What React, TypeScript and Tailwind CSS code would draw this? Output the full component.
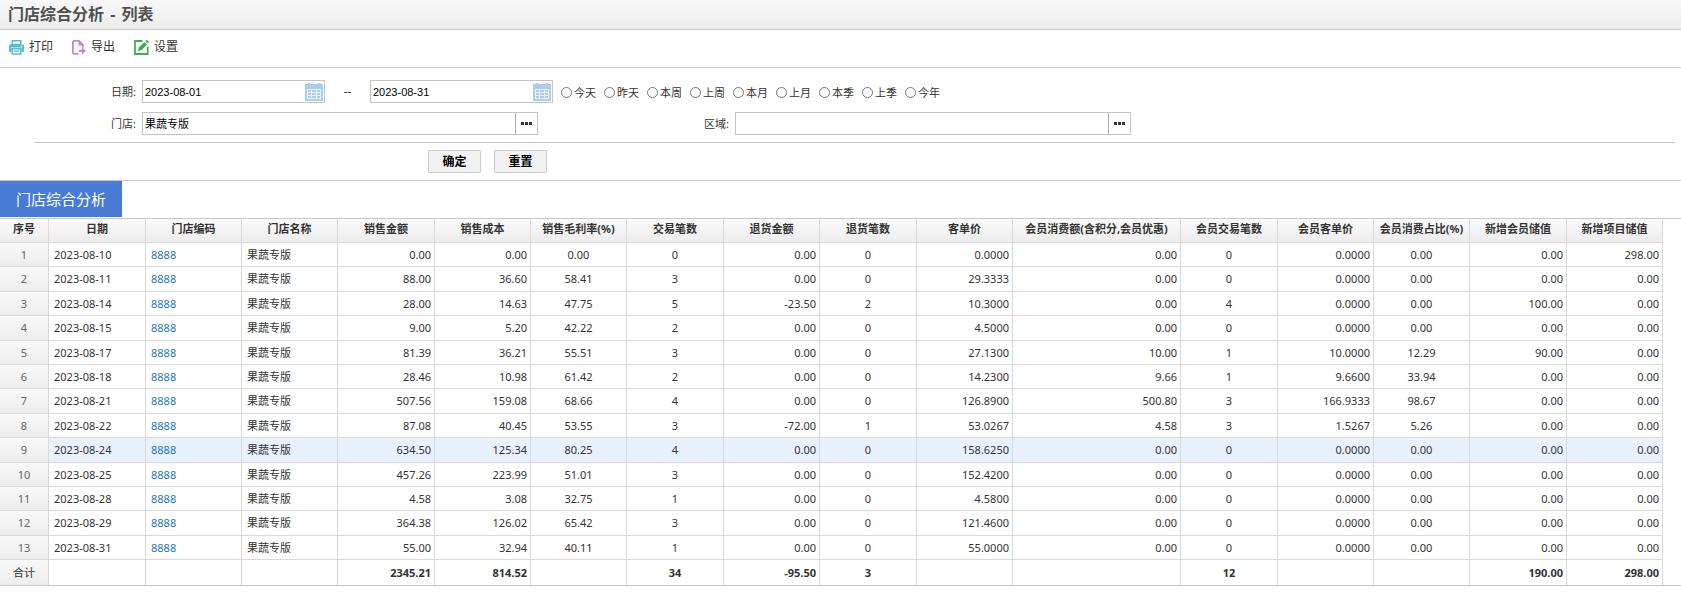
import { useState } from "react";
import clsx from "clsx";

type Align = "left" | "center" | "right";

type Column = {
  title: string;
  width: number;
  align: Align;
};

const columns: Column[] = [
  { title: "日期", width: 97, align: "left" },
  { title: "门店编码", width: 96, align: "left" },
  { title: "门店名称", width: 96, align: "left" },
  { title: "销售金额", width: 97, align: "right" },
  { title: "销售成本", width: 96, align: "right" },
  { title: "销售毛利率(%)", width: 96, align: "center" },
  { title: "交易笔数", width: 97, align: "center" },
  { title: "退货金额", width: 96, align: "right" },
  { title: "退货笔数", width: 97, align: "center" },
  { title: "客单价", width: 96, align: "right" },
  { title: "会员消费额(含积分,会员优惠)", width: 168, align: "right" },
  { title: "会员交易笔数", width: 97, align: "center" },
  { title: "会员客单价", width: 96, align: "right" },
  { title: "会员消费占比(%)", width: 96, align: "center" },
  { title: "新增会员储值", width: 97, align: "right" },
  { title: "新增项目储值", width: 96, align: "right" },
];

const STORE = ["8888", "果蔬专版"];

const rows: string[][] = [
  ["2023-08-10", ...STORE, "0.00", "0.00", "0.00", "0", "0.00", "0", "0.0000", "0.00", "0", "0.0000", "0.00", "0.00", "298.00"],
  ["2023-08-11", ...STORE, "88.00", "36.60", "58.41", "3", "0.00", "0", "29.3333", "0.00", "0", "0.0000", "0.00", "0.00", "0.00"],
  ["2023-08-14", ...STORE, "28.00", "14.63", "47.75", "5", "-23.50", "2", "10.3000", "0.00", "4", "0.0000", "0.00", "100.00", "0.00"],
  ["2023-08-15", ...STORE, "9.00", "5.20", "42.22", "2", "0.00", "0", "4.5000", "0.00", "0", "0.0000", "0.00", "0.00", "0.00"],
  ["2023-08-17", ...STORE, "81.39", "36.21", "55.51", "3", "0.00", "0", "27.1300", "10.00", "1", "10.0000", "12.29", "90.00", "0.00"],
  ["2023-08-18", ...STORE, "28.46", "10.98", "61.42", "2", "0.00", "0", "14.2300", "9.66", "1", "9.6600", "33.94", "0.00", "0.00"],
  ["2023-08-21", ...STORE, "507.56", "159.08", "68.66", "4", "0.00", "0", "126.8900", "500.80", "3", "166.9333", "98.67", "0.00", "0.00"],
  ["2023-08-22", ...STORE, "87.08", "40.45", "53.55", "3", "-72.00", "1", "53.0267", "4.58", "3", "1.5267", "5.26", "0.00", "0.00"],
  ["2023-08-24", ...STORE, "634.50", "125.34", "80.25", "4", "0.00", "0", "158.6250", "0.00", "0", "0.0000", "0.00", "0.00", "0.00"],
  ["2023-08-25", ...STORE, "457.26", "223.99", "51.01", "3", "0.00", "0", "152.4200", "0.00", "0", "0.0000", "0.00", "0.00", "0.00"],
  ["2023-08-28", ...STORE, "4.58", "3.08", "32.75", "1", "0.00", "0", "4.5800", "0.00", "0", "0.0000", "0.00", "0.00", "0.00"],
  ["2023-08-29", ...STORE, "364.38", "126.02", "65.42", "3", "0.00", "0", "121.4600", "0.00", "0", "0.0000", "0.00", "0.00", "0.00"],
  ["2023-08-31", ...STORE, "55.00", "32.94", "40.11", "1", "0.00", "0", "55.0000", "0.00", "0", "0.0000", "0.00", "0.00", "0.00"],
];

const totals = ["", "", "", "2345.21", "814.52", "", "34", "-95.50", "3", "", "", "12", "", "", "190.00", "298.00"];

const periods = ["今天", "昨天", "本周", "上周", "本月", "上月", "本季", "上季", "今年"];

const alignClass: Record<Align, string> = {
  left: "pl-[5px] text-left",
  center: "text-center",
  right: "pr-[3px] text-right",
};

function PrintIcon() {
  return (
    <svg width="15" height="15" viewBox="0 0 15 15" aria-hidden="true">
      <path fill="#52bfcc" d="M2.500 0h10v4.500h-10zM1.500 4.200h12A1.500 1.500 0 0 1 15 5.700V11a1 1 0 0 1-1 1h-1.500V8.500h-10V12H1a1 1 0 0 1-1-1V5.700a1.500 1.500 0 0 1 1.500-1.500z" />
      <path fill="#fff" d="M4 1.500h7V4H4zM2 7.500h11v1H2z" />
      <path fill="none" stroke="#52bfcc" strokeWidth="1.500" d="M3.300 8.800h8.400v5.200H3.300z" />
      <path fill="#52bfcc" d="M5 10.500h5v1.300H5z" />
      <path fill="#fff" d="M11.800 5.500h1.400v1h-1.400z" />
    </svg>
  );
}

function ExportIcon() {
  return (
    <svg width="14" height="15" viewBox="0 0 14 15" aria-hidden="true">
      <path fill="none" stroke="#cf7ee0" strokeWidth="1.800" d="M6.500 13.800H2.200a1.300 1.300 0 0 1-1.300-1.300V2A1.200 1.200 0 0 1 2.100.9h5l3.800 4V7.500" />
      <path fill="#cf7ee0" d="M6.500.5 11.500 5.500h-5zM7 9.800h3V7.300l4 3.600-4 3.600v-2.400H7z" />
    </svg>
  );
}

function SettingIcon() {
  return (
    <svg width="15" height="15" viewBox="0 0 15 15" aria-hidden="true">
      <path fill="none" stroke="#44ad52" strokeWidth="1.800" d="M8.500 1H1v13h12.700V6.500" />
      <path fill="#44ad52" d="m4 11.200.8-3.800L10.400 2l2.700 2.600-5.700 5.600zM11.200 1.200l1-1q.6-.4 1.200.1l1.200 1.200q.5.6 0 1.200l-.8.9z" />
    </svg>
  );
}

function CalendarIcon() {
  return (
    <svg width="18" height="18" viewBox="0 0 18 18" aria-hidden="true">
      <path fill="#aecde8" d="M0 1h2.500V0h3v1h7V0h3v1H18v17H0z" />
      <path fill="#e9f3fb" d="M2 6h14v10H2z" />
      <path fill="#aecde8" d="M3 7h3v2H3zM7 7h4v2H7zM12 7h3v2h-3zM3 10h3v2H3zM7 10h4v2H7zM12 10h3v2h-3zM3 13h3v2H3zM7 13h4v2H7zM12 13h3v2h-3z" />
    </svg>
  );
}

function DateField({ id, label, value }: { id: string; label: string; value: string }) {
  return (
    <div className="flex h-[23px] w-[183px] items-center border border-[#c4c4c4] bg-white">
      <input
        id={id}
        aria-label={label}
        defaultValue={value}
        className="min-w-0 flex-1 pl-[2px] font-['Liberation_Sans','Noto_Sans_CJK_SC',sans-serif] text-[11px] text-black outline-none"
      />
      <button type="button" aria-label="选择日期" className="mr-px">
        <CalendarIcon />
      </button>
    </div>
  );
}

function PickerField({ id, value }: { id: string; value: string }) {
  return (
    <div className="flex h-[23px] w-[396px] border border-[#c4c4c4] bg-white">
      <input id={id} defaultValue={value} className="min-w-0 flex-1 pl-[2px] text-[11px] text-black outline-none" />
      <button type="button" aria-label="选择" className="flex w-[22px] items-center justify-center gap-px border-l border-[#aaa]">
        <span className="size-[3px] bg-[#333]" />
        <span className="size-[3px] bg-[#333]" />
        <span className="size-[3px] bg-[#333]" />
      </button>
    </div>
  );
}

function ReportTable() {
  return (
    <table className="w-full table-fixed border-separate border-spacing-0 text-[11px] leading-4">
      <colgroup>
        <col style={{ width: 49 }} />
        {columns.map((column) => (
          <col key={column.title} style={{ width: column.width }} />
        ))}
      </colgroup>
      <thead>
        <tr className="h-6 bg-linear-to-b from-[#fafafa] to-[#ececec]">
          <th scope="col" className="border-r border-b border-[#d9d9d9] p-0 pb-[3px] font-bold">
            序号
          </th>
          {columns.map((column) => (
            <th key={column.title} scope="col" className="border-r border-b border-[#d9d9d9] p-0 pb-[3px] font-bold whitespace-nowrap">
              {column.title}
            </th>
          ))}
        </tr>
      </thead>
      <tbody>
        {rows.map((row, index) => (
          <tr key={row[0]} className={clsx("h-6 nth-[5n+2]:h-[25px] nth-[5n+4]:h-[25px]", index === 8 && "bg-[#e9f1ff]")}>
            <th scope="row" className="border-r border-b border-[#d9d9d9] bg-linear-to-b from-[#f9f9f9] to-[#ededed] p-0 font-normal text-[#666]">
              {index + 1}
            </th>
            {row.map((cell, i) => (
              <td key={columns[i].title} className={clsx("border-r border-b border-[#d9d9d9] p-0", alignClass[columns[i].align])}>
                {i === 1 ? (
                  <a href="#store" className="text-[#1f78b4]">
                    {cell}
                  </a>
                ) : (
                  cell
                )}
              </td>
            ))}
          </tr>
        ))}
      </tbody>
      <tfoot>
        <tr className="h-[25px]">
          <th scope="row" className="border-r border-[#d9d9d9] bg-linear-to-b from-[#f9f9f9] to-[#ededed] p-0 font-medium text-[#555]">
            合计
          </th>
          {totals.map((cell, i) => (
            <td key={columns[i].title} className={clsx("border-r border-[#d9d9d9] p-0 font-bold", alignClass[columns[i].align])}>
              {cell}
            </td>
          ))}
        </tr>
      </tfoot>
    </table>
  );
}

export default function App() {
  const [period, setPeriod] = useState("");

  return (
    <main className="bg-white font-['Noto_Sans','Noto_Sans_CJK_SC',sans-serif] text-[11px] leading-4 text-[#333]">
      <header className="flex h-[30px] items-center border-b border-[#c8c8c8] bg-linear-to-b from-[#f8f8f8] to-[#ececec] px-2 pb-px">
        <h1 className="text-base leading-6 font-bold text-[#505050]">
          门店综合分析 <span className="mx-[2px]">-</span> 列表
        </h1>
      </header>

      <nav className="flex h-[38px] items-start gap-[19px] border-b border-[#c8c8c8] px-[9px] pt-[9px] text-xs leading-4">
        <button type="button" className="flex items-center gap-[5px]">
          <PrintIcon />
          打印
        </button>
        <button type="button" className="flex items-center gap-[5px]">
          <ExportIcon />
          导出
        </button>
        <button type="button" className="flex items-center gap-[5px]">
          <SettingIcon />
          设置
        </button>
      </nav>

      <form onSubmit={(event) => event.preventDefault()}>
        <div className="mr-[6px] ml-[34px] flex flex-col gap-[9px] border-b border-[#c8c8c8] pt-3 pb-[7px]">
          <div className="flex items-center">
            <label htmlFor="date-from" className="w-[108px] pr-[6px] text-right">
              日期:
            </label>
            <DateField id="date-from" label="开始日期" value="2023-08-01" />
            <span className="w-[45px] text-center text-xs">--</span>
            <DateField id="date-to" label="结束日期" value="2023-08-31" />
            <div className="flex gap-[6px] pt-[2px] pl-2">
              {periods.map((name) => (
                <label key={name} className="flex w-[37px] items-center gap-[2px] whitespace-nowrap">
                  <input
                    type="radio"
                    name="period"
                    checked={period === name}
                    onChange={() => setPeriod(name)}
                    className="size-[11px] shrink-0 appearance-none rounded-full border border-[#767676] checked:border-4"
                  />
                  {name}
                </label>
              ))}
            </div>
          </div>
          <div className="flex items-center">
            <label htmlFor="store" className="w-[108px] pr-[6px] text-right">
              门店:
            </label>
            <PickerField id="store" value="果蔬专版" />
            <label htmlFor="area" className="w-[197px] pr-[6px] text-right">
              区域:
            </label>
            <PickerField id="area" value="" />
          </div>
        </div>
        <div className="flex gap-[13px] border-b border-[#c8c8c8] pt-[7px] pb-[7px] pl-[428px]">
          <button type="submit" className="h-[23px] w-[53px] rounded-[1px] border border-[#ccc] bg-[#f2f2f2] text-xs font-bold text-black">
            确定
          </button>
          <button type="reset" className="h-[23px] w-[53px] rounded-[1px] border border-[#ccc] bg-[#f2f2f2] text-xs font-bold text-black">
            重置
          </button>
        </div>
      </form>

      <div className="border-b border-[#c8c8c8] pb-px">
        <button type="button" className="h-9 w-[122px] bg-[#477bd5] text-[15px] text-white">
          门店综合分析
        </button>
      </div>

      <div className="border-b border-[#c8c8c8] pr-[18px]">
        <ReportTable />
      </div>
    </main>
  );
}
